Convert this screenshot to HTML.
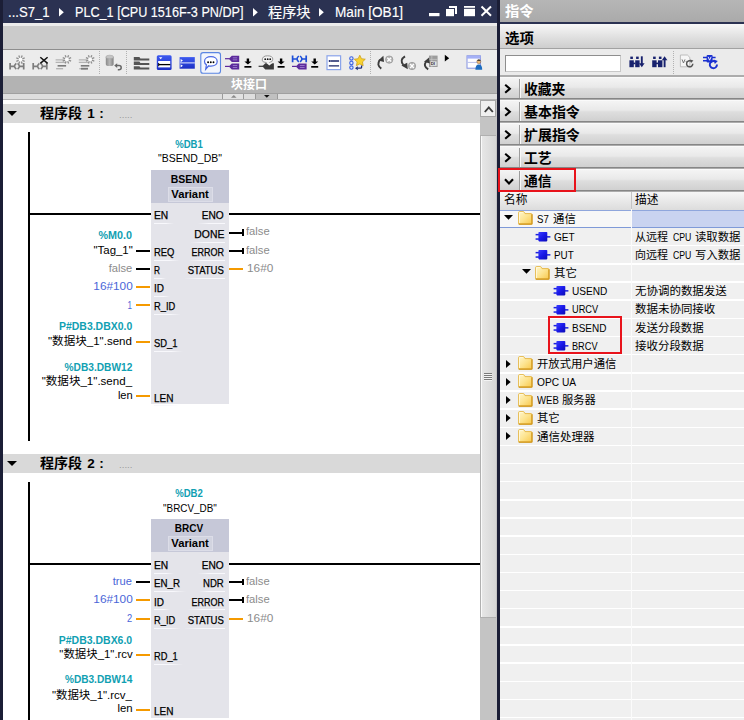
<!DOCTYPE html>
<html lang="zh-CN">
<head>
<meta charset="utf-8">
<title>TIA Portal - Main [OB1]</title>
<style>
html,body{margin:0;padding:0;}
body{width:744px;height:720px;overflow:hidden;position:relative;background:#fff;
  font-family:"Liberation Sans","Noto Sans CJK SC",sans-serif;font-size:11px;color:#000;}
.a{position:absolute;}
.t{position:absolute;white-space:nowrap;line-height:14px;height:14px;}
svg{position:absolute;overflow:visible;}
#ltitle{left:0;top:0;width:497px;height:23px;background:#2b3252;}
#lborder{left:0;top:0;width:3px;height:720px;background:#1b1e36;}
#lgray{left:3px;top:23px;width:494px;height:26.6px;background:#cbcbcb;border-top:3px solid #ebebeb;box-sizing:border-box;border-bottom:1.2px solid #8e8e8e;}
#ltool{left:3px;top:49.6px;width:494px;height:26.4px;background:#ececec;}
#lif{left:3px;top:76px;width:494px;height:17.4px;background:#b3b3b3;}
#lif2{left:3px;top:93.3px;width:494px;height:6.9px;background:#dedede;border-bottom:1.3px solid #b4b4b4;box-sizing:border-box;border-top:0.9px solid #a0a0a0;}
.tw{color:#fff;font-size:14px;-webkit-text-stroke:0.15px #fff;}
.tri{width:0;height:0;border-left:5px solid transparent;border-right:5px solid transparent;border-top:5.2px solid #000;}
.k{background:#000;}
.o{background:#f59a00;}
.blk{background:#e4e4ea;}
.bh{background:#c6c8d8;}
.cy{color:#10a0b2;font-weight:bold;font-size:11.6px;}
.gy{color:#8c8c8c;}
.bl{color:#4a66d8;}
.b{font-weight:bold;}
.pn{-webkit-text-stroke:0.25px #000;font-size:10.5px;}
.ul{height:1px;background:linear-gradient(90deg,#f8f8fc 60%,rgba(248,248,252,0));}
.ulr{height:1px;background:linear-gradient(270deg,#f8f8fc 60%,rgba(248,248,252,0));}
#sep{left:496.7px;top:0;width:3.3px;height:720px;background:#1b1e36;}
#rtitle{left:500px;top:0;width:244px;height:22px;background:linear-gradient(#b6b6b6,#aaaaaa);}
#rdark{left:500px;top:22px;width:244px;height:2px;background:#2b3252;}
#ropt{left:500px;top:24px;width:244px;height:25px;background:linear-gradient(#f8f8f8,#e2e2e2 50%,#cecece);border-bottom:1px solid #a2a2a2;box-sizing:border-box;}
#rsearch{left:500px;top:49px;width:244px;height:28px;background:#ebebeb;}
#sin{left:505px;top:54.5px;width:114px;height:15.5px;background:#fff;border:1px solid #8e8e8e;border-bottom-color:#c8c8c8;border-right-color:#c8c8c8;}
.sec{background:linear-gradient(#f4f4f4 0%,#e9e9e9 46%,#dedede 54%,#d0d0d0 100%);border-top:1px solid #fafafa;border-bottom:1.2px solid #868686;box-sizing:border-box;}
.secd{background:#9c9c9c;border-right:1px solid #f8f8f8;}
.sect{font-weight:bold;font-size:14px;}
.row{background:#f0f0f0;}
.red{border:2px solid #e8131b;box-sizing:border-box;}
#sbtrack{left:480px;top:100px;width:17px;height:620px;background:#c4c4c4;}
.r12{font-size:11.5px;}
</style>
</head>
<body>
<div class="a" id="ltitle"></div><div class="a" id="lgray"></div><div class="a" id="ltool"></div><div class="a" id="lif"></div><div class="a" id="lif2"></div>
<div class="t tw" style="top:3.8px;line-height:16px;height:16px;left:8.0px;transform:scaleX(0.9352);transform-origin:left center;">...S7_1</div>
<div class="t tw" style="top:3.8px;line-height:16px;height:16px;left:74.5px;transform:scaleX(0.9023);transform-origin:left center;">PLC_1 [CPU 1516F-3 PN/DP]</div>
<div class="t tw" style="top:3.8px;line-height:16px;height:16px;left:267.5px;transform:scaleX(1.0119);transform-origin:left center;">程序块</div>
<div class="t tw" style="top:3.8px;line-height:16px;height:16px;left:335.0px;transform:scaleX(0.9710);transform-origin:left center;">Main [OB1]</div>
<svg style="left:59.4px;top:7.6px" width="5" height="9"><path d="M0 0 L4.8 4.3 L0 8.6Z" fill="#fff"/></svg>
<svg style="left:253px;top:7.6px" width="5" height="9"><path d="M0 0 L4.8 4.3 L0 8.6Z" fill="#fff"/></svg>
<svg style="left:319.4px;top:7.6px" width="5" height="9"><path d="M0 0 L4.8 4.3 L0 8.6Z" fill="#fff"/></svg>
<svg style="left:429px;top:5px" width="64" height="13"><rect x="0" y="8" width="10.5" height="3.2" fill="#fff"/><path d="M20 1h8v8h-2v-6h-6z" fill="#fff"/><rect x="17" y="4" width="8" height="7.2" fill="#fff"/><rect x="35" y="1" width="11" height="10.2" fill="#fff"/><rect x="35" y="2.8" width="11" height="1" fill="#2b3252"/><path d="M52.5 1.5 L62 10.8 M62 1.5 L52.5 10.8" stroke="#fff" stroke-width="2"/></svg>
<div class="t b" style="top:77.5px;left:149.0px;width:200px;text-align:center;transform:scaleX(0.9996);transform-origin:center center;color:#fff;font-size:12px;">块接口</div>
<div class="a " style="left:222.3px;top:94.2px;width:22.2px;height:4.7px;border-left:1px solid #9a9a9a;border-right:1px solid #9a9a9a;box-sizing:border-box;background:#e2e2e2;"></div>
<div class="a " style="left:255.3px;top:94.2px;width:22.6px;height:4.7px;border-left:1px solid #9a9a9a;border-right:1px solid #9a9a9a;box-sizing:border-box;background:#c0c0c0;"></div>
<svg style="left:231.2px;top:95.2px" width="6" height="3"><path d="M0 2.8L2.8 0L5.6 2.8Z" fill="#8a8a8a"/></svg>
<svg style="left:263.6px;top:94.8px" width="6" height="3"><path d="M0 0L2.8 2.8L5.6 0Z" fill="#111"/></svg>
<div class="a" id="sbtrack"></div>
<div class="a " style="left:480.2px;top:100.4px;width:16.0px;height:17.0px;background:#f0f0f0;border:1px solid #a6a6a6;box-sizing:border-box;"></div>
<svg style="left:483.6px;top:105.6px" width="10" height="7"><path d="M0.8 6L4.8 1.4L8.8 6" stroke="#3c3c3c" stroke-width="1.9" fill="none"/></svg>
<div class="a " style="left:479.7px;top:135.0px;width:16.8px;height:482.6px;background:linear-gradient(90deg,#fafafa 0,#fafafa 1.2px,#e6e6e6 1.3px,#d6d6d6 14.6px,#f2f2f2 14.7px);border:1px solid #b0b0b0;border-right:none;box-sizing:border-box;"></div>
<div class="a " style="left:484.3px;top:373.1px;width:7.8px;height:1.0px;background:#7a7a7a;box-shadow:0 1px 0 #f4f4f4;"></div>
<div class="a " style="left:484.3px;top:375.0px;width:7.8px;height:1.0px;background:#7a7a7a;box-shadow:0 1px 0 #f4f4f4;"></div>
<div class="a " style="left:484.3px;top:377.0px;width:7.8px;height:1.0px;background:#7a7a7a;box-shadow:0 1px 0 #f4f4f4;"></div>
<div class="a " style="left:484.3px;top:378.9px;width:7.8px;height:1.0px;background:#7a7a7a;box-shadow:0 1px 0 #f4f4f4;"></div>
<div class="a " style="left:3.0px;top:104.2px;width:477.0px;height:19.3px;background:#d9d9d9;"></div>
<div class="a tri" style="left:7px;top:111.0px"></div>
<div class="t b" style="top:105.8px;line-height:16px;height:16px;left:40.3px;transform:scaleX(1.0370);transform-origin:left center;font-size:13.5px;">程序段</div>
<div class="t b" style="top:105.9px;line-height:16px;height:16px;left:87.2px;font-size:13.5px;">1</div>
<div class="t b" style="top:105.6px;line-height:16px;height:16px;left:99.3px;font-size:13.5px;">:</div>
<div class="t " style="top:107.6px;left:118.5px;transform:scaleX(1.0787);transform-origin:left center;font-size:9px;color:#9a9a9a;">.....</div>
<div class="a k" style="left:28.2px;top:132.0px;width:2.0px;height:309.0px;"></div>
<div class="t cy" style="top:137.2px;left:89.0px;width:200px;text-align:center;transform:scaleX(0.8235);transform-origin:center center;">%DB1</div>
<div class="t " style="top:151.4px;left:89.5px;width:200px;text-align:center;transform:scaleX(0.9507);transform-origin:center center;">"BSEND_DB"</div>
<div class="a blk" style="left:150.5px;top:170.2px;width:78.0px;height:234.3px;"></div>
<div class="a bh" style="left:150.5px;top:170.2px;width:78.0px;height:32.8px;"></div>
<div class="t b" style="top:172.1px;left:89.2px;width:200px;text-align:center;transform:scaleX(0.9867);transform-origin:center center;font-size:10.6px;">BSEND</div>
<div class="a " style="left:167.5px;top:187.0px;width:45.0px;height:15.0px;background:#d2d4e0;border:1px solid #dcdde8;box-sizing:border-box;"></div>
<div class="t b" style="top:186.9px;left:89.5px;width:200px;text-align:center;transform:scaleX(1.0610);transform-origin:center center;font-size:10.6px;">Variant</div>
<div class="a k" style="left:30.0px;top:212.9px;width:120.5px;height:2.0px;"></div>
<div class="a k" style="left:228.5px;top:212.9px;width:251.5px;height:2.0px;"></div>
<div class="t pn" style="top:208.2px;left:154.3px;transform:scaleX(0.9730);transform-origin:left center;">EN</div>
<div class="a ul" style="left:153.5px;top:222.9px;width:20.2px;height:1.0px;"></div>
<div class="t pn" style="top:245.3px;left:154.3px;transform:scaleX(0.8961);transform-origin:left center;">REQ</div>
<div class="a ul" style="left:153.5px;top:260.0px;width:26.4px;height:1.0px;"></div>
<div class="t pn" style="top:262.9px;left:154.3px;transform:scaleX(0.7901);transform-origin:left center;">R</div>
<div class="a ul" style="left:153.5px;top:277.6px;width:12.0px;height:1.0px;"></div>
<div class="t pn" style="top:281.1px;left:154.3px;transform:scaleX(0.9524);transform-origin:left center;">ID</div>
<div class="a ul" style="left:153.5px;top:295.8px;width:16.0px;height:1.0px;"></div>
<div class="t pn" style="top:299.4px;left:154.3px;transform:scaleX(0.8856);transform-origin:left center;">R_ID</div>
<div class="a ul" style="left:153.5px;top:314.1px;width:27.2px;height:1.0px;"></div>
<div class="t pn" style="top:335.8px;left:154.3px;transform:scaleX(0.8947);transform-origin:left center;">SD_1</div>
<div class="a ul" style="left:153.5px;top:350.5px;width:29.5px;height:1.0px;"></div>
<div class="t pn" style="top:390.5px;left:154.3px;transform:scaleX(0.9541);transform-origin:left center;">LEN</div>
<div class="a ul" style="left:153.5px;top:405.2px;width:25.5px;height:1.0px;"></div>
<div class="t pn" style="top:208.2px;right:519.9px;transform:scaleX(0.9664);transform-origin:right center;">ENO</div>
<div class="a ulr" style="left:198.1px;top:222.9px;width:27.0px;height:1.0px;"></div>
<div class="t pn" style="top:227.0px;right:519.9px;transform:scaleX(0.9887);transform-origin:right center;">DONE</div>
<div class="a ulr" style="left:190.1px;top:241.7px;width:35.0px;height:1.0px;"></div>
<div class="a k" style="left:228.5px;top:231.7px;width:14.0px;height:2.0px;"></div>
<div class="a k" style="left:242.0px;top:229.2px;width:1.7px;height:6.5px;"></div>
<div class="t gy" style="top:224.2px;left:246.4px;transform:scaleX(1.0194);transform-origin:left center;">false</div>
<div class="t pn" style="top:245.3px;right:519.9px;transform:scaleX(0.8570);transform-origin:right center;">ERROR</div>
<div class="a ulr" style="left:187.6px;top:260.0px;width:37.5px;height:1.0px;"></div>
<div class="a k" style="left:228.5px;top:250.0px;width:14.0px;height:2.0px;"></div>
<div class="a k" style="left:242.0px;top:247.5px;width:1.7px;height:6.5px;"></div>
<div class="t gy" style="top:242.5px;left:246.4px;transform:scaleX(1.0194);transform-origin:left center;">false</div>
<div class="t pn" style="top:262.9px;right:519.9px;transform:scaleX(0.9078);transform-origin:right center;">STATUS</div>
<div class="a ulr" style="left:183.9px;top:277.6px;width:41.2px;height:1.0px;"></div>
<div class="a o" style="left:228.5px;top:267.6px;width:14.5px;height:2.0px;"></div>
<div class="t gy" style="top:261.0px;left:247.2px;transform:scaleX(1.0742);transform-origin:left center;">16#0</div>
<div class="t cy" style="top:228.3px;right:611.7px;transform:scaleX(0.9309);transform-origin:right center;">%M0.0</div>
<div class="t " style="top:242.8px;right:611.7px;transform:scaleX(1.0402);transform-origin:right center;">"Tag_1"</div>
<div class="a k" style="left:136.3px;top:250.0px;width:14.2px;height:2.0px;"></div>
<div class="t gy" style="top:260.7px;right:611.7px;transform:scaleX(1.0151);transform-origin:right center;">false</div>
<div class="a k" style="left:136.3px;top:267.6px;width:14.2px;height:2.0px;"></div>
<div class="t bl" style="top:279.2px;right:611.7px;transform:scaleX(1.0730);transform-origin:right center;">16#100</div>
<div class="a o" style="left:136.3px;top:285.8px;width:14.2px;height:2.0px;"></div>
<div class="t bl" style="top:297.5px;right:611.7px;transform:scaleX(0.7347);transform-origin:right center;">1</div>
<div class="a o" style="left:136.3px;top:304.1px;width:14.2px;height:2.0px;"></div>
<div class="t cy" style="top:319.4px;right:611.7px;transform:scaleX(0.9014);transform-origin:right center;">P#DB3.DBX0.0</div>
<div class="t " style="top:333.8px;right:611.7px;transform:scaleX(1.0504);transform-origin:right center;">"数据块_1".send</div>
<div class="a o" style="left:136.3px;top:340.5px;width:14.2px;height:2.0px;"></div>
<div class="t cy" style="top:359.5px;right:611.7px;transform:scaleX(0.8770);transform-origin:right center;">%DB3.DBW12</div>
<div class="t " style="top:374.2px;right:611.7px;transform:scaleX(1.0502);transform-origin:right center;">"数据块_1".send_</div>
<div class="t " style="top:387.6px;right:611.7px;transform:scaleX(1.0077);transform-origin:right center;">len</div>
<div class="a o" style="left:136.3px;top:395.2px;width:14.2px;height:2.0px;"></div>
<div class="a " style="left:3.0px;top:454.2px;width:477.0px;height:19.3px;background:#d9d9d9;"></div>
<div class="a tri" style="left:7px;top:461.0px"></div>
<div class="t b" style="top:455.8px;line-height:16px;height:16px;left:40.3px;transform:scaleX(1.0370);transform-origin:left center;font-size:13.5px;">程序段</div>
<div class="t b" style="top:455.9px;line-height:16px;height:16px;left:87.2px;font-size:13.5px;">2</div>
<div class="t b" style="top:455.6px;line-height:16px;height:16px;left:99.3px;font-size:13.5px;">:</div>
<div class="t " style="top:457.6px;left:118.5px;transform:scaleX(1.0787);transform-origin:left center;font-size:9px;color:#9a9a9a;">.....</div>
<div class="a k" style="left:28.2px;top:482.0px;width:2.0px;height:238.0px;"></div>
<div class="t cy" style="top:486.3px;left:89.0px;width:200px;text-align:center;transform:scaleX(0.8235);transform-origin:center center;">%DB2</div>
<div class="t " style="top:500.5px;left:89.5px;width:200px;text-align:center;transform:scaleX(0.8999);transform-origin:center center;">"BRCV_DB"</div>
<div class="a blk" style="left:150.5px;top:519.3px;width:78.0px;height:198.7px;"></div>
<div class="a bh" style="left:150.5px;top:519.3px;width:78.0px;height:32.8px;"></div>
<div class="t b" style="top:521.2px;left:89.2px;width:200px;text-align:center;transform:scaleX(0.9457);transform-origin:center center;font-size:10.6px;">BRCV</div>
<div class="a " style="left:167.5px;top:536.1px;width:45.0px;height:15.0px;background:#d2d4e0;border:1px solid #dcdde8;box-sizing:border-box;"></div>
<div class="t b" style="top:536.0px;left:89.5px;width:200px;text-align:center;transform:scaleX(1.0610);transform-origin:center center;font-size:10.6px;">Variant</div>
<div class="a k" style="left:30.0px;top:562.9px;width:120.5px;height:2.0px;"></div>
<div class="a k" style="left:228.5px;top:562.9px;width:251.5px;height:2.0px;"></div>
<div class="t pn" style="top:558.2px;left:154.3px;transform:scaleX(0.9730);transform-origin:left center;">EN</div>
<div class="a ul" style="left:153.5px;top:572.9px;width:20.2px;height:1.0px;"></div>
<div class="t pn" style="top:576.4px;left:154.3px;transform:scaleX(0.9281);transform-origin:left center;">EN_R</div>
<div class="a ul" style="left:153.5px;top:591.1px;width:32.0px;height:1.0px;"></div>
<div class="t pn" style="top:594.7px;left:154.3px;transform:scaleX(0.9524);transform-origin:left center;">ID</div>
<div class="a ul" style="left:153.5px;top:609.4px;width:16.0px;height:1.0px;"></div>
<div class="t pn" style="top:612.9px;left:154.3px;transform:scaleX(0.8856);transform-origin:left center;">R_ID</div>
<div class="a ul" style="left:153.5px;top:627.6px;width:27.2px;height:1.0px;"></div>
<div class="t pn" style="top:649.3px;left:154.3px;transform:scaleX(0.8824);transform-origin:left center;">RD_1</div>
<div class="a ul" style="left:153.5px;top:664.0px;width:29.7px;height:1.0px;"></div>
<div class="t pn" style="top:704.0px;left:154.3px;transform:scaleX(0.9541);transform-origin:left center;">LEN</div>
<div class="a ul" style="left:153.5px;top:718.7px;width:25.5px;height:1.0px;"></div>
<div class="t pn" style="top:558.2px;right:519.9px;transform:scaleX(0.9664);transform-origin:right center;">ENO</div>
<div class="a ulr" style="left:198.1px;top:572.9px;width:27.0px;height:1.0px;"></div>
<div class="t pn" style="top:576.4px;right:519.9px;transform:scaleX(0.9099);transform-origin:right center;">NDR</div>
<div class="a ulr" style="left:199.4px;top:591.1px;width:25.7px;height:1.0px;"></div>
<div class="a k" style="left:228.5px;top:581.1px;width:14.0px;height:2.0px;"></div>
<div class="a k" style="left:242.0px;top:578.6px;width:1.7px;height:6.5px;"></div>
<div class="t gy" style="top:573.6px;left:246.4px;transform:scaleX(1.0194);transform-origin:left center;">false</div>
<div class="t pn" style="top:594.7px;right:519.9px;transform:scaleX(0.8570);transform-origin:right center;">ERROR</div>
<div class="a ulr" style="left:187.6px;top:609.4px;width:37.5px;height:1.0px;"></div>
<div class="a k" style="left:228.5px;top:599.4px;width:14.0px;height:2.0px;"></div>
<div class="a k" style="left:242.0px;top:596.9px;width:1.7px;height:6.5px;"></div>
<div class="t gy" style="top:591.9px;left:246.4px;transform:scaleX(1.0194);transform-origin:left center;">false</div>
<div class="t pn" style="top:612.9px;right:519.9px;transform:scaleX(0.9078);transform-origin:right center;">STATUS</div>
<div class="a ulr" style="left:183.9px;top:627.6px;width:41.2px;height:1.0px;"></div>
<div class="a o" style="left:228.5px;top:617.6px;width:14.5px;height:2.0px;"></div>
<div class="t gy" style="top:611.0px;left:247.2px;transform:scaleX(1.0742);transform-origin:left center;">16#0</div>
<div class="t bl" style="top:574.0px;right:611.7px;transform:scaleX(1.0122);transform-origin:right center;">true</div>
<div class="a k" style="left:136.3px;top:581.1px;width:14.2px;height:2.0px;"></div>
<div class="t bl" style="top:592.2px;right:611.7px;transform:scaleX(1.0730);transform-origin:right center;">16#100</div>
<div class="a o" style="left:136.3px;top:599.4px;width:14.2px;height:2.0px;"></div>
<div class="t bl" style="top:610.7px;right:611.7px;transform:scaleX(0.8490);transform-origin:right center;">2</div>
<div class="a o" style="left:136.3px;top:617.6px;width:14.2px;height:2.0px;"></div>
<div class="t cy" style="top:632.6px;right:611.7px;transform:scaleX(0.9039);transform-origin:right center;">P#DB3.DBX6.0</div>
<div class="t " style="top:647.4px;right:611.7px;transform:scaleX(1.0372);transform-origin:right center;">"数据块_1".rcv</div>
<div class="a o" style="left:136.3px;top:654.0px;width:14.2px;height:2.0px;"></div>
<div class="t cy" style="top:672.0px;right:611.7px;transform:scaleX(0.8718);transform-origin:right center;">%DB3.DBW14</div>
<div class="t " style="top:687.6px;right:611.7px;transform:scaleX(1.0404);transform-origin:right center;">"数据块_1".rcv_</div>
<div class="t " style="top:700.5px;right:611.7px;transform:scaleX(1.0349);transform-origin:right center;">len</div>
<div class="a o" style="left:136.3px;top:708.7px;width:14.2px;height:2.0px;"></div>
<div class="a" id="lborder"></div>
<div class="a" id="sep"></div><div class="a" id="rtitle"></div><div class="a" id="rdark"></div><div class="a" id="ropt"></div><div class="a" id="rsearch"></div><div class="a" id="sin"></div>
<div class="t b" style="top:3.0px;line-height:16px;height:16px;left:505.3px;transform:scaleX(1.0214);transform-origin:left center;color:#fff;font-size:14px;">指令</div>
<div class="t b" style="top:29.5px;line-height:16px;height:16px;left:505.3px;transform:scaleX(1.0286);transform-origin:left center;font-size:14px;">选项</div>
<div class="a " style="left:500.0px;top:75.4px;width:244.0px;height:117.0px;background:#acacac;"></div>
<div class="a sec" style="left:500.0px;top:77.0px;width:244.0px;height:21.6px;"></div>
<div class="a secd" style="left:519.0px;top:79.0px;width:1.0px;height:18.6px;"></div>
<div class="t sect" style="top:80.5px;line-height:16px;height:16px;left:524.3px;transform:scaleX(0.9857);transform-origin:left center;">收藏夹</div>
<svg style="left:504.2px;top:84.0px" width="8" height="10"><path d="M1.2 0.8L5.8 4.8L1.2 8.8" stroke="#000" stroke-width="2.1" fill="none"/></svg>
<div class="a sec" style="left:500.0px;top:100.0px;width:244.0px;height:21.6px;"></div>
<div class="a secd" style="left:519.0px;top:102.0px;width:1.0px;height:18.6px;"></div>
<div class="t sect" style="top:103.5px;line-height:16px;height:16px;left:524.3px;transform:scaleX(0.9964);transform-origin:left center;">基本指令</div>
<svg style="left:504.2px;top:107.0px" width="8" height="10"><path d="M1.2 0.8L5.8 4.8L1.2 8.8" stroke="#000" stroke-width="2.1" fill="none"/></svg>
<div class="a sec" style="left:500.0px;top:123.1px;width:244.0px;height:21.6px;"></div>
<div class="a secd" style="left:519.0px;top:125.1px;width:1.0px;height:18.6px;"></div>
<div class="t sect" style="top:126.6px;line-height:16px;height:16px;left:524.3px;transform:scaleX(0.9964);transform-origin:left center;">扩展指令</div>
<svg style="left:504.2px;top:130.1px" width="8" height="10"><path d="M1.2 0.8L5.8 4.8L1.2 8.8" stroke="#000" stroke-width="2.1" fill="none"/></svg>
<div class="a sec" style="left:500.0px;top:146.2px;width:244.0px;height:21.6px;"></div>
<div class="a secd" style="left:519.0px;top:148.2px;width:1.0px;height:18.6px;"></div>
<div class="t sect" style="top:149.7px;line-height:16px;height:16px;left:524.3px;transform:scaleX(0.9857);transform-origin:left center;">工艺</div>
<svg style="left:504.2px;top:153.2px" width="8" height="10"><path d="M1.2 0.8L5.8 4.8L1.2 8.8" stroke="#000" stroke-width="2.1" fill="none"/></svg>
<div class="a sec" style="left:500.0px;top:169.2px;width:244.0px;height:21.6px;"></div>
<div class="a secd" style="left:519.0px;top:171.2px;width:1.0px;height:18.6px;"></div>
<div class="t sect" style="top:172.7px;line-height:16px;height:16px;left:524.3px;transform:scaleX(0.9857);transform-origin:left center;">通信</div>
<svg style="left:503.8px;top:177.5px" width="10" height="7"><path d="M1 1.2L5 5.4L9 1.2" stroke="#000" stroke-width="2.1" fill="none"/></svg>
<div class="a " style="left:500.0px;top:192.0px;width:244.0px;height:17.6px;background:linear-gradient(#f6f6f6,#e9e9e9 50%,#dcdcdc);"></div>
<div class="t " style="top:191.8px;line-height:16px;height:16px;left:503.7px;transform:scaleX(0.9785);transform-origin:left center;font-size:12px;">名称</div>
<div class="t " style="top:191.8px;line-height:16px;height:16px;left:634.5px;transform:scaleX(0.9785);transform-origin:left center;font-size:12px;">描述</div>
<div class="a row" style="left:500.0px;top:210.1px;width:244.0px;height:16.8px;"></div>
<div class="a row" style="left:500.0px;top:228.2px;width:244.0px;height:16.8px;"></div>
<div class="a row" style="left:500.0px;top:246.4px;width:244.0px;height:16.8px;"></div>
<div class="a row" style="left:500.0px;top:264.6px;width:244.0px;height:16.8px;"></div>
<div class="a row" style="left:500.0px;top:282.7px;width:244.0px;height:16.8px;"></div>
<div class="a row" style="left:500.0px;top:300.9px;width:244.0px;height:16.8px;"></div>
<div class="a row" style="left:500.0px;top:319.0px;width:244.0px;height:16.8px;"></div>
<div class="a row" style="left:500.0px;top:337.1px;width:244.0px;height:16.8px;"></div>
<div class="a row" style="left:500.0px;top:355.3px;width:244.0px;height:16.8px;"></div>
<div class="a row" style="left:500.0px;top:373.5px;width:244.0px;height:16.8px;"></div>
<div class="a row" style="left:500.0px;top:391.6px;width:244.0px;height:16.8px;"></div>
<div class="a row" style="left:500.0px;top:409.8px;width:244.0px;height:16.8px;"></div>
<div class="a row" style="left:500.0px;top:427.9px;width:244.0px;height:16.8px;"></div>
<div class="a row" style="left:500.0px;top:446.1px;width:244.0px;height:16.8px;"></div>
<div class="a row" style="left:500.0px;top:464.2px;width:244.0px;height:16.8px;"></div>
<div class="a row" style="left:500.0px;top:482.4px;width:244.0px;height:16.8px;"></div>
<div class="a row" style="left:500.0px;top:500.5px;width:244.0px;height:16.8px;"></div>
<div class="a row" style="left:500.0px;top:518.6px;width:244.0px;height:16.8px;"></div>
<div class="a row" style="left:500.0px;top:536.8px;width:244.0px;height:16.8px;"></div>
<div class="a row" style="left:500.0px;top:554.9px;width:244.0px;height:16.8px;"></div>
<div class="a row" style="left:500.0px;top:573.1px;width:244.0px;height:16.8px;"></div>
<div class="a row" style="left:500.0px;top:591.2px;width:244.0px;height:16.8px;"></div>
<div class="a row" style="left:500.0px;top:609.4px;width:244.0px;height:16.8px;"></div>
<div class="a row" style="left:500.0px;top:627.6px;width:244.0px;height:16.8px;"></div>
<div class="a row" style="left:500.0px;top:645.7px;width:244.0px;height:16.8px;"></div>
<div class="a row" style="left:500.0px;top:663.9px;width:244.0px;height:16.8px;"></div>
<div class="a row" style="left:500.0px;top:682.0px;width:244.0px;height:16.8px;"></div>
<div class="a row" style="left:500.0px;top:700.1px;width:244.0px;height:16.8px;"></div>
<div class="a row" style="left:500.0px;top:718.3px;width:244.0px;height:16.8px;"></div>
<div class="a " style="left:500.0px;top:210.1px;width:131.0px;height:16.8px;background:#f7f7f7;"></div>
<div class="a " style="left:631.5px;top:210.1px;width:112.5px;height:16.8px;background:#c9d3f0;"></div>
<div class="a " style="left:500.0px;top:209.6px;width:244.0px;height:1.3px;background:#8fa6dc;"></div>
<div class="a " style="left:500.0px;top:226.7px;width:244.0px;height:1.3px;background:#7f9ad8;"></div>
<div class="a " style="left:630.6px;top:209.0px;width:1.0px;height:520.0px;background:#fbfbfb;"></div>
<div class="a " style="left:630.6px;top:192.0px;width:1.0px;height:17.0px;background:#c4c4c4;"></div>
<svg width="0" height="0"><defs><linearGradient id="fg" x1="0" y1="0" x2="1" y2="1"><stop offset="0" stop-color="#fff6cc"/><stop offset="0.5" stop-color="#fde490"/><stop offset="1" stop-color="#f8c84c"/></linearGradient><linearGradient id="fs" x1="0" y1="0" x2="1" y2="1"><stop offset="0" stop-color="#ecc860"/><stop offset="1" stop-color="#c4962a"/></linearGradient><linearGradient id="bgf" x1="0" y1="0" x2="1" y2="1"><stop offset="0" stop-color="#3a3cff"/><stop offset="0.5" stop-color="#1818e8"/><stop offset="1" stop-color="#0c0cb4"/></linearGradient></defs></svg>
<svg style="left:504.2px;top:214.9px" width="9" height="5"><path d="M0 0H9L4.5 4.7Z" fill="#000"/></svg>
<svg style="left:518.0px;top:211.1px" width="15" height="14"><path d="M0.6 1.4 q0 -0.8 0.8 -0.8 h4 q0.6 0 0.9 0.6 l0.7 1.4 h6 q0.9 0 0.9 0.9 v9 q0 0.6 -0.6 0.6 h-12.1 q-0.6 0 -0.6 -0.6z" fill="url(#fg)" stroke="#e4b440" stroke-width="0.9"/><path d="M0.7 13.1h12.9q0.4 0 0.4 -0.4v-9.4" fill="none" stroke="#cf9416" stroke-width="1.2"/><path d="M1.5 12V1.6h3.6" fill="none" stroke="#fffbe6" stroke-width="0.8"/></svg>
<div class="t r12" style="top:210.7px;line-height:16px;height:16px;left:537.3px;transform:scaleX(0.8382);transform-origin:left center;">S7</div>
<div class="t r12" style="top:210.7px;line-height:16px;height:16px;left:552.6px;transform:scaleX(0.9913);transform-origin:left center;">通信</div>
<svg style="left:535.3px;top:231.9px" width="16" height="11"><rect x="0.6" y="1.9" width="4" height="1.5" fill="#1c22e0"/><rect x="0.6" y="6.3" width="4" height="1.5" fill="#1c22e0"/><rect x="11.5" y="4.1" width="3.9" height="1.5" fill="#1c22e0"/><rect x="3.4" y="0" width="8.9" height="9.4" rx="0.8" fill="url(#bgf)"/></svg>
<div class="t r12" style="top:228.9px;line-height:16px;height:16px;left:554.2px;transform:scaleX(0.8756);transform-origin:left center;">GET</div>
<div class="t r12" style="top:228.9px;line-height:16px;height:16px;left:634.5px;transform:scaleX(0.9565);transform-origin:left center;">从远程</div>
<div class="t r12" style="top:228.9px;line-height:16px;height:16px;left:673.0px;transform:scaleX(0.7578);transform-origin:left center;">CPU</div>
<div class="t r12" style="top:228.9px;line-height:16px;height:16px;left:695.4px;transform:scaleX(0.9870);transform-origin:left center;">读取数据</div>
<svg style="left:535.3px;top:250.1px" width="16" height="11"><rect x="0.6" y="1.9" width="4" height="1.5" fill="#1c22e0"/><rect x="0.6" y="6.3" width="4" height="1.5" fill="#1c22e0"/><rect x="11.5" y="4.1" width="3.9" height="1.5" fill="#1c22e0"/><rect x="3.4" y="0" width="8.9" height="9.4" rx="0.8" fill="url(#bgf)"/></svg>
<div class="t r12" style="top:247.0px;line-height:16px;height:16px;left:554.2px;transform:scaleX(0.8565);transform-origin:left center;">PUT</div>
<div class="t r12" style="top:247.0px;line-height:16px;height:16px;left:634.5px;transform:scaleX(0.9565);transform-origin:left center;">向远程</div>
<div class="t r12" style="top:247.0px;line-height:16px;height:16px;left:673.0px;transform:scaleX(0.7578);transform-origin:left center;">CPU</div>
<div class="t r12" style="top:247.0px;line-height:16px;height:16px;left:695.4px;transform:scaleX(0.9870);transform-origin:left center;">写入数据</div>
<svg style="left:522.2px;top:269.4px" width="9" height="5"><path d="M0 0H9L4.5 4.7Z" fill="#000"/></svg>
<svg style="left:535.3px;top:265.6px" width="15" height="14"><path d="M0.6 1.4 q0 -0.8 0.8 -0.8 h4 q0.6 0 0.9 0.6 l0.7 1.4 h6 q0.9 0 0.9 0.9 v9 q0 0.6 -0.6 0.6 h-12.1 q-0.6 0 -0.6 -0.6z" fill="url(#fg)" stroke="#e4b440" stroke-width="0.9"/><path d="M0.7 13.1h12.9q0.4 0 0.4 -0.4v-9.4" fill="none" stroke="#cf9416" stroke-width="1.2"/><path d="M1.5 12V1.6h3.6" fill="none" stroke="#fffbe6" stroke-width="0.8"/></svg>
<div class="t r12" style="top:265.2px;line-height:16px;height:16px;left:554.3px;transform:scaleX(0.9957);transform-origin:left center;">其它</div>
<svg style="left:553.1px;top:286.4px" width="16" height="11"><rect x="0.6" y="1.9" width="4" height="1.5" fill="#1c22e0"/><rect x="0.6" y="6.3" width="4" height="1.5" fill="#1c22e0"/><rect x="11.5" y="4.1" width="3.9" height="1.5" fill="#1c22e0"/><rect x="3.4" y="0" width="8.9" height="9.4" rx="0.8" fill="url(#bgf)"/></svg>
<div class="t r12" style="top:283.3px;line-height:16px;height:16px;left:572.0px;transform:scaleX(0.8792);transform-origin:left center;">USEND</div>
<div class="t r12" style="top:283.3px;line-height:16px;height:16px;left:634.5px;transform:scaleX(0.9978);transform-origin:left center;">无协调的数据发送</div>
<svg style="left:553.1px;top:304.5px" width="16" height="11"><rect x="0.6" y="1.9" width="4" height="1.5" fill="#1c22e0"/><rect x="0.6" y="6.3" width="4" height="1.5" fill="#1c22e0"/><rect x="11.5" y="4.1" width="3.9" height="1.5" fill="#1c22e0"/><rect x="3.4" y="0" width="8.9" height="9.4" rx="0.8" fill="url(#bgf)"/></svg>
<div class="t r12" style="top:301.4px;line-height:16px;height:16px;left:572.0px;transform:scaleX(0.8038);transform-origin:left center;">URCV</div>
<div class="t r12" style="top:301.4px;line-height:16px;height:16px;left:634.5px;transform:scaleX(0.9975);transform-origin:left center;">数据未协同接收</div>
<svg style="left:553.1px;top:322.7px" width="16" height="11"><rect x="0.6" y="1.9" width="4" height="1.5" fill="#1c22e0"/><rect x="0.6" y="6.3" width="4" height="1.5" fill="#1c22e0"/><rect x="11.5" y="4.1" width="3.9" height="1.5" fill="#1c22e0"/><rect x="3.4" y="0" width="8.9" height="9.4" rx="0.8" fill="url(#bgf)"/></svg>
<div class="t r12" style="top:319.6px;line-height:16px;height:16px;left:572.0px;transform:scaleX(0.8681);transform-origin:left center;">BSEND</div>
<div class="t r12" style="top:319.6px;line-height:16px;height:16px;left:634.5px;transform:scaleX(0.9971);transform-origin:left center;">发送分段数据</div>
<svg style="left:553.1px;top:340.8px" width="16" height="11"><rect x="0.6" y="1.9" width="4" height="1.5" fill="#1c22e0"/><rect x="0.6" y="6.3" width="4" height="1.5" fill="#1c22e0"/><rect x="11.5" y="4.1" width="3.9" height="1.5" fill="#1c22e0"/><rect x="3.4" y="0" width="8.9" height="9.4" rx="0.8" fill="url(#bgf)"/></svg>
<div class="t r12" style="top:337.8px;line-height:16px;height:16px;left:572.0px;transform:scaleX(0.7980);transform-origin:left center;">BRCV</div>
<div class="t r12" style="top:337.8px;line-height:16px;height:16px;left:634.5px;transform:scaleX(0.9971);transform-origin:left center;">接收分段数据</div>
<svg style="left:506.0px;top:359.6px" width="5" height="8"><path d="M0 0V8L4.7 4Z" fill="#000"/></svg>
<svg style="left:518.0px;top:356.3px" width="15" height="14"><path d="M0.6 1.4 q0 -0.8 0.8 -0.8 h4 q0.6 0 0.9 0.6 l0.7 1.4 h6 q0.9 0 0.9 0.9 v9 q0 0.6 -0.6 0.6 h-12.1 q-0.6 0 -0.6 -0.6z" fill="url(#fg)" stroke="#e4b440" stroke-width="0.9"/><path d="M0.7 13.1h12.9q0.4 0 0.4 -0.4v-9.4" fill="none" stroke="#cf9416" stroke-width="1.2"/><path d="M1.5 12V1.6h3.6" fill="none" stroke="#fffbe6" stroke-width="0.8"/></svg>
<div class="t r12" style="top:355.9px;line-height:16px;height:16px;left:537.0px;transform:scaleX(0.9863);transform-origin:left center;">开放式用户通信</div>
<svg style="left:506.0px;top:377.8px" width="5" height="8"><path d="M0 0V8L4.7 4Z" fill="#000"/></svg>
<svg style="left:518.0px;top:374.4px" width="15" height="14"><path d="M0.6 1.4 q0 -0.8 0.8 -0.8 h4 q0.6 0 0.9 0.6 l0.7 1.4 h6 q0.9 0 0.9 0.9 v9 q0 0.6 -0.6 0.6 h-12.1 q-0.6 0 -0.6 -0.6z" fill="url(#fg)" stroke="#e4b440" stroke-width="0.9"/><path d="M0.7 13.1h12.9q0.4 0 0.4 -0.4v-9.4" fill="none" stroke="#cf9416" stroke-width="1.2"/><path d="M1.5 12V1.6h3.6" fill="none" stroke="#fffbe6" stroke-width="0.8"/></svg>
<div class="t r12" style="top:374.1px;line-height:16px;height:16px;left:537.0px;transform:scaleX(0.8867);transform-origin:left center;">OPC UA</div>
<svg style="left:506.0px;top:395.9px" width="5" height="8"><path d="M0 0V8L4.7 4Z" fill="#000"/></svg>
<svg style="left:518.0px;top:392.6px" width="15" height="14"><path d="M0.6 1.4 q0 -0.8 0.8 -0.8 h4 q0.6 0 0.9 0.6 l0.7 1.4 h6 q0.9 0 0.9 0.9 v9 q0 0.6 -0.6 0.6 h-12.1 q-0.6 0 -0.6 -0.6z" fill="url(#fg)" stroke="#e4b440" stroke-width="0.9"/><path d="M0.7 13.1h12.9q0.4 0 0.4 -0.4v-9.4" fill="none" stroke="#cf9416" stroke-width="1.2"/><path d="M1.5 12V1.6h3.6" fill="none" stroke="#fffbe6" stroke-width="0.8"/></svg>
<div class="t r12" style="top:392.2px;line-height:16px;height:16px;left:537.2px;transform:scaleX(0.8320);transform-origin:left center;">WEB</div>
<div class="t r12" style="top:392.2px;line-height:16px;height:16px;left:562.3px;transform:scaleX(0.9797);transform-origin:left center;">服务器</div>
<svg style="left:506.0px;top:414.0px" width="5" height="8"><path d="M0 0V8L4.7 4Z" fill="#000"/></svg>
<svg style="left:518.0px;top:410.7px" width="15" height="14"><path d="M0.6 1.4 q0 -0.8 0.8 -0.8 h4 q0.6 0 0.9 0.6 l0.7 1.4 h6 q0.9 0 0.9 0.9 v9 q0 0.6 -0.6 0.6 h-12.1 q-0.6 0 -0.6 -0.6z" fill="url(#fg)" stroke="#e4b440" stroke-width="0.9"/><path d="M0.7 13.1h12.9q0.4 0 0.4 -0.4v-9.4" fill="none" stroke="#cf9416" stroke-width="1.2"/><path d="M1.5 12V1.6h3.6" fill="none" stroke="#fffbe6" stroke-width="0.8"/></svg>
<div class="t r12" style="top:410.3px;line-height:16px;height:16px;left:537.0px;transform:scaleX(0.9870);transform-origin:left center;">其它</div>
<svg style="left:506.0px;top:432.2px" width="5" height="8"><path d="M0 0V8L4.7 4Z" fill="#000"/></svg>
<svg style="left:518.0px;top:428.9px" width="15" height="14"><path d="M0.6 1.4 q0 -0.8 0.8 -0.8 h4 q0.6 0 0.9 0.6 l0.7 1.4 h6 q0.9 0 0.9 0.9 v9 q0 0.6 -0.6 0.6 h-12.1 q-0.6 0 -0.6 -0.6z" fill="url(#fg)" stroke="#e4b440" stroke-width="0.9"/><path d="M0.7 13.1h12.9q0.4 0 0.4 -0.4v-9.4" fill="none" stroke="#cf9416" stroke-width="1.2"/><path d="M1.5 12V1.6h3.6" fill="none" stroke="#fffbe6" stroke-width="0.8"/></svg>
<div class="t r12" style="top:428.5px;line-height:16px;height:16px;left:537.0px;transform:scaleX(1.0000);transform-origin:left center;">通信处理器</div>
<svg style="left:0;top:0" width="497" height="76" viewBox="0 0 497 76"><path d="M10.1 62.9v6.6M23.7 62.9v6.6M10.1 66.3h4.2M19.5 66.3h4.2" stroke="#7c7c7c" stroke-width="1.7" fill="none"/><path d="M16.3 63.3q-3.6 2.9 0 5.8M17.6 63.3q3.6 2.9 0 5.8" stroke="#7c7c7c" stroke-width="1.6" fill="none"/><circle cx="20.5" cy="59.6" r="2.6" fill="#fbfbfb"/><path d="M22.3 60.4L24.7 61.3" stroke="#8e8e8e" stroke-width="1.3"/><path d="M21.3 61.4L22.2 63.8" stroke="#8e8e8e" stroke-width="1.3"/><path d="M19.7 61.4L18.8 63.8" stroke="#8e8e8e" stroke-width="1.3"/><path d="M18.7 60.4L16.3 61.3" stroke="#8e8e8e" stroke-width="1.3"/><path d="M18.7 58.8L16.3 57.9" stroke="#8e8e8e" stroke-width="1.3"/><path d="M19.7 57.8L18.8 55.4" stroke="#8e8e8e" stroke-width="1.3"/><path d="M21.3 57.8L22.2 55.4" stroke="#8e8e8e" stroke-width="1.3"/><path d="M22.3 58.8L24.7 57.9" stroke="#8e8e8e" stroke-width="1.3"/><path d="M33.2 62.9v6.6M46.8 62.9v6.6M33.2 66.3h4.2M42.6 66.3h4.2" stroke="#7c7c7c" stroke-width="1.7" fill="none"/><path d="M39.4 63.3q-3.6 2.9 0 5.8M40.7 63.3q3.6 2.9 0 5.8" stroke="#7c7c7c" stroke-width="1.6" fill="none"/><path d="M40.3 57.2L47.6 63.4M47.6 57.2L40.3 63.4" stroke="#111" stroke-width="1.5"/><path d="M55.6 59.8h10M55.6 62.4h10" stroke="#b4b4b4" stroke-width="1.3"/><path d="M57.6 65.8h8.5" stroke="#7a7a7a" stroke-width="1.6"/><path d="M56.1 68.7h7" stroke="#b0b0b0" stroke-width="1.3"/><circle cx="66.9" cy="59.4" r="2.6" fill="#fbfbfb"/><path d="M68.7 60.2L71.1 61.1" stroke="#8e8e8e" stroke-width="1.3"/><path d="M67.7 61.2L68.6 63.6" stroke="#8e8e8e" stroke-width="1.3"/><path d="M66.1 61.2L65.2 63.6" stroke="#8e8e8e" stroke-width="1.3"/><path d="M65.1 60.2L62.7 61.1" stroke="#8e8e8e" stroke-width="1.3"/><path d="M65.1 58.6L62.7 57.7" stroke="#8e8e8e" stroke-width="1.3"/><path d="M66.1 57.6L65.2 55.2" stroke="#8e8e8e" stroke-width="1.3"/><path d="M67.7 57.6L68.6 55.2" stroke="#8e8e8e" stroke-width="1.3"/><path d="M68.7 58.6L71.1 57.7" stroke="#8e8e8e" stroke-width="1.3"/><path d="M78.8 59.8h10M78.8 62.4h10" stroke="#b4b4b4" stroke-width="1.3"/><path d="M80.8 65.8h8.5" stroke="#7a7a7a" stroke-width="1.6"/><path d="M79.3 68.7h7" stroke="#b0b0b0" stroke-width="1.3"/><circle cx="90.1" cy="59.4" r="2.6" fill="#fbfbfb"/><path d="M91.9 60.2L94.3 61.1" stroke="#8e8e8e" stroke-width="1.3"/><path d="M90.9 61.2L91.8 63.6" stroke="#8e8e8e" stroke-width="1.3"/><path d="M89.3 61.2L88.4 63.6" stroke="#8e8e8e" stroke-width="1.3"/><path d="M88.3 60.2L85.9 61.1" stroke="#8e8e8e" stroke-width="1.3"/><path d="M88.3 58.6L85.9 57.7" stroke="#8e8e8e" stroke-width="1.3"/><path d="M89.3 57.6L88.4 55.2" stroke="#8e8e8e" stroke-width="1.3"/><path d="M90.9 57.6L91.8 55.2" stroke="#8e8e8e" stroke-width="1.3"/><path d="M91.9 58.6L94.3 57.7" stroke="#8e8e8e" stroke-width="1.3"/><path d="M81 68.7h7" stroke="#7a7a7a" stroke-width="1.8"/><path d="M99.5 51V74" stroke="#b2b2b2" stroke-width="1" stroke-dasharray="1 1" shape-rendering="crispEdges"/><defs><linearGradient id="cg" x1="0" x2="1"><stop offset="0" stop-color="#8a8a8a"/><stop offset="0.5" stop-color="#b8b8b8"/><stop offset="1" stop-color="#808080"/></linearGradient></defs><path d="M105.8 57v7.2q0 1.9 3.9 1.9q3.9 0 3.9 -1.9v-7.2z" fill="url(#cg)"/><ellipse cx="109.7" cy="57" rx="3.9" ry="1.8" fill="#c4c4c4" stroke="#9a9a9a" stroke-width="0.5"/><path d="M116 65.6h3q2.2 0 2.2 2.1q0 2 -2.4 2h-1" stroke="#666" stroke-width="1.5" fill="none"/><path d="M114.2 65.6l3 -2.3v4.6z" fill="#666"/><path d="M126.5 51V74" stroke="#b2b2b2" stroke-width="1" stroke-dasharray="1 1" shape-rendering="crispEdges"/><path d="M133.8 57.1h5.6l1 1.4h8.9v1.9h-15.5z" fill="#555"/><path d="M133.8 61.6h5.6l1 1.4h8.9v1.9h-15.5z" fill="#555"/><path d="M133.8 66.2h5.6l1 1.4h8.9v1.9h-15.5z" fill="#555"/><defs><linearGradient id="bg7" x1="0" y1="0" x2="0" y2="1"><stop offset="0" stop-color="#3d5af0"/><stop offset="1" stop-color="#1c2fc4"/></linearGradient></defs><rect x="156.8" y="55.2" width="14.8" height="14.8" rx="1.5" fill="url(#bg7)"/><rect x="158.2" y="61" width="12" height="6.4" fill="#fff"/><path d="M158.7 64.6h11.6" stroke="#000" stroke-width="1.3"/><path d="M158.7 63v3.2" stroke="#000" stroke-width="1"/><path d="M159 57.3h3.4l-1.7 2z" fill="#fff"/><rect x="179.6" y="57.1" width="15.2" height="11.6" fill="url(#bg7)"/><path d="M180 62.9h14.8" stroke="#e8ecff" stroke-width="1"/><path d="M180.6 59l2.3 1.6l-2.3 1.6zM180.6 64.2l2.3 1.6l-2.3 1.6z" fill="#fff"/><rect x="200.8" y="52.6" width="19.7" height="20.7" rx="2.3" fill="#f3f6fd" stroke="#5b86e2" stroke-width="1.1"/><path d="M210.9 56.7c3.6 0 6.3 2 6.3 4.7c0 2.7 -2.7 4.7 -6.3 4.7c-0.8 0 -1.5 -0.1 -2.2 -0.3l-3 3.4l0.7 -4.4c-1.2 -0.9 -1.9 -2 -1.9 -3.4c0 -2.7 2.8 -4.7 6.4 -4.7z" fill="#fff" stroke="#4a68e4" stroke-width="1.2"/><circle cx="208.1" cy="62.2" r="0.95" fill="#000"/><circle cx="210.8" cy="62.2" r="0.95" fill="#000"/><circle cx="213.5" cy="62.2" r="0.95" fill="#000"/><path d="M228.8 58.8l3 -3.1h7.4v6.2h-7.4z" fill="#5c2a9c"/><path d="M225.0 58.699999999999996h4.5" stroke="#5c2a9c" stroke-width="1.2"/><rect x="232.8" y="57.4" width="4.4" height="0.9" fill="#9a7ccc"/><rect x="232.8" y="59.4" width="4.4" height="0.9" fill="#9a7ccc"/><path d="M228.8 66.5l3 -3.1h7.4v6.2h-7.4z" fill="#5c2a9c"/><path d="M225.0 66.4h4.5" stroke="#5c2a9c" stroke-width="1.2"/><rect x="232.8" y="65.1" width="4.4" height="0.9" fill="#9a7ccc"/><rect x="232.8" y="67.1" width="4.4" height="0.9" fill="#9a7ccc"/><path d="M246.70000000000002 58.4h2.4v3h2.3l-3.5 3.2l-3.5 -3.2h2.3z" fill="#000"/><rect x="244.4" y="66.0" width="7" height="1.7" fill="#000"/><path d="M262.2 60.2q0 -4.4 5.3 -4.4q5.3 0 5.3 3.4q0 3 -3.6 3.4l-2.2 2.2l-0.4 -2.2q-4.4 -0.2 -4.4 -2.4z" fill="#f4f4f4" stroke="#8c8c8c" stroke-width="0.9"/><circle cx="265.2" cy="59.2" r="0.9" fill="#111"/><circle cx="267.7" cy="59.2" r="0.9" fill="#111"/><circle cx="270.2" cy="59.2" r="0.9" fill="#111"/><path d="M262.3 66.3l3 -3h8.6v6.2h-8.6z" fill="#3a3a3a"/><path d="M258.6 66.3h4.4" stroke="#3a3a3a" stroke-width="1.2"/><path d="M266 62.8l3.3 2.6l3.6 -2.6z" fill="#f4f4f4"/><path d="M279.90000000000003 58.4h2.4v3h2.3l-3.5 3.2l-3.5 -3.2h2.3z" fill="#000"/><rect x="277.6" y="66.0" width="7" height="1.7" fill="#000"/><path d="M292.6 55.6v6.6M306.2 55.6v6.6M292.6 59.0h4.2M302.0 59.0h4.2" stroke="#1d4fd8" stroke-width="1.7" fill="none"/><path d="M298.8 56.0q-3.6 2.9 0 5.8M300.1 56.0q3.6 2.9 0 5.8" stroke="#1d4fd8" stroke-width="1.6" fill="none"/><path d="M295.8 66.5l3 -3.1h7.800000000000001v6.2h-7.800000000000001z" fill="#5c2a9c"/><path d="M292.0 66.4h4.5" stroke="#5c2a9c" stroke-width="1.2"/><rect x="299.8" y="65.1" width="4.800000000000001" height="0.9" fill="#9a7ccc"/><rect x="299.8" y="67.1" width="4.800000000000001" height="0.9" fill="#9a7ccc"/><path d="M313.5 58.4h2.4v3h2.3l-3.5 3.2l-3.5 -3.2h2.3z" fill="#000"/><rect x="311.2" y="66.0" width="7" height="1.7" fill="#000"/><rect x="327" y="55.8" width="13.6" height="13.8" fill="#fff" stroke="#8aa4ea" stroke-width="1.2"/><path d="M330.5 61h8.6M328.8 65.8h10.3" stroke="#1a2468" stroke-width="1.3"/><circle cx="329.6" cy="61" r="1" fill="#1a2468"/><circle cx="351.4" cy="58.4" r="1.7" fill="#dfe8ff" stroke="#3b62e0" stroke-width="1.1"/><circle cx="351.4" cy="63" r="1.7" fill="#dfe8ff" stroke="#3b62e0" stroke-width="1.1"/><circle cx="351.4" cy="67.6" r="1.7" fill="#dfe8ff" stroke="#3b62e0" stroke-width="1.1"/><path d="M359.8 55.2l1.7 3.5l3.8 0.5l-2.8 2.7l0.7 3.8l-3.4 -1.8l-3.4 1.8l0.7 -3.8l-2.8 -2.7l3.8 -0.5z" fill="#f8d230" stroke="#c89a10" stroke-width="0.7"/><path d="M361.6 65.6v1.6q0 1 -1 1h-3" stroke="#1a2a78" stroke-width="1.3" fill="none"/><path d="M355 68.2l2.8 -2v4z" fill="#1a2a78"/><path d="M370.5 51V74" stroke="#b2b2b2" stroke-width="1" stroke-dasharray="1 1" shape-rendering="crispEdges"/><path d="M381.3 68.6q-5.2 -3.4 -1.4 -8.8" stroke="#3c3c3c" stroke-width="1.9" fill="none"/><path d="M378.2 60.4l5.2 -4.6l0.6 6.2z" fill="#3c3c3c"/><circle cx="389.2" cy="59.6" r="3.7" fill="#b4b4b4" stroke="#8a8a8a" stroke-width="0.6"/><path d="M387.3 57.7l3.8 3.8M391.09999999999997 57.7l-3.8 3.8" stroke="#fff" stroke-width="1.4"/><path d="M405 56.4q-5.8 3.6 -1.6 8.6" stroke="#3c3c3c" stroke-width="1.9" fill="none"/><path d="M401.4 65.6l6.4 3.6l-0.6 -6.4z" fill="#3c3c3c"/><circle cx="412" cy="66" r="3.7" fill="#b4b4b4" stroke="#8a8a8a" stroke-width="0.6"/><path d="M410.1 64.1l3.8 3.8M413.9 64.1l-3.8 3.8" stroke="#fff" stroke-width="1.4"/><rect x="429" y="55.6" width="8.6" height="11.4" fill="#9c9c9c"/><path d="M431.8 55.6v11.4M429 59.4h8.6" stroke="#c8c8c8" stroke-width="0.7"/><rect x="430.4" y="61.4" width="6.2" height="4.4" fill="#e8e8e8"/><text x="430.7" y="65.3" font-family="Liberation Sans,sans-serif" font-size="4.4" font-weight="bold" fill="#333">DI</text><path d="M428.2 69.4q-5.4 -3 -2 -8.2" stroke="#3c3c3c" stroke-width="1.9" fill="none"/><path d="M424 61.8l5 -4.2l0.8 6z" fill="#3c3c3c"/><path d="M444.8 54.8v6.8l4.4 -3.4z" fill="#000"/><rect x="467" y="55.8" width="13.4" height="12.4" fill="#fdfdff" stroke="#8492e2" stroke-width="1"/><rect x="467" y="55.8" width="13.4" height="2.8" fill="#a4b0f6"/><path d="M467.4 62.4h12.6" stroke="#b8c0ea" stroke-width="1"/><circle cx="478.8" cy="61.7" r="2" fill="#e8b87a" stroke="#6a4a2a" stroke-width="0.4"/><path d="M475.4 69.8q0 -5.4 3.4 -5.4q3.4 0 3.4 5.4z" fill="#1c6cc0"/><path d="M477 60.7q1.8 -2.2 3.8 0z" fill="#222"/></svg>
<svg style="left:500px;top:48px" width="244" height="30" viewBox="500 48 244 30"><rect x="630.3" y="56.599999999999994" width="2.6" height="2.4" fill="#18226e"/><path d="M629.4 60.3h4.4v6.9h-4.4z" fill="#18226e"/><rect x="636.1" y="56.599999999999994" width="2.6" height="2.4" fill="#18226e"/><path d="M635.2 60.3h4.4v6.9h-4.4z" fill="#18226e"/><rect x="632.6999999999999" y="62.6" width="2.8" height="1.6" fill="#18226e"/><path d="M641.8 56.3v8" stroke="#18226e" stroke-width="1.9"/><path d="M639.0 63.2h5.6l-2.8 4z" fill="#18226e"/><rect x="653.1" y="56.599999999999994" width="2.6" height="2.4" fill="#18226e"/><path d="M652.2 60.3h4.4v6.9h-4.4z" fill="#18226e"/><rect x="658.9000000000001" y="56.599999999999994" width="2.6" height="2.4" fill="#18226e"/><path d="M658.0000000000001 60.3h4.4v6.9h-4.4z" fill="#18226e"/><rect x="655.5" y="62.6" width="2.8" height="1.6" fill="#18226e"/><path d="M664.6 59.4v7.8" stroke="#18226e" stroke-width="1.9"/><path d="M661.8000000000001 60.3h5.6l-2.8 -4z" fill="#18226e"/><path d="M673.5 51V74" stroke="#b2b2b2" stroke-width="1" stroke-dasharray="1 1" shape-rendering="crispEdges"/><path d="M680.4 55h7l2.4 2.4v9.4h-9.4z" fill="#f6f6f6" stroke="#b0b0b0" stroke-width="0.8"/><path d="M682 59.4l1.5 3.6l1.5 -3.6" stroke="#6a6a6a" stroke-width="0.9" fill="none"/><path d="M685.5 61.4h3.4" stroke="#9a9a9a" stroke-width="0.9"/><path d="M692.8 63.8a3.1 3.1 0 1 1 -1.7 -2.8" stroke="#555" stroke-width="1.5" fill="none"/><path d="M690 59.4l3.4 1.2l-2.4 2.4z" fill="#555"/><path d="M703 57.4h4M712 57.4h3.6M703 60.8h4" stroke="#1a30d0" stroke-width="1.5"/><rect x="706.6" y="55" width="6" height="7.4" rx="1" fill="#1a30d0"/><path d="M708.1 56.8l1.5 3.4l1.5 -3.4" stroke="#fff" stroke-width="0.9" fill="none"/><path d="M717 64.6a3.6 3.6 0 1 1 -2 -3.2" stroke="#1a30d0" stroke-width="1.9" fill="none"/><path d="M713.6 59.6l4.2 1.4l-3 3z" fill="#1a30d0"/></svg>
<div class="a red" style="left:498.0px;top:168.0px;width:78.0px;height:24.3px;"></div>
<div class="a red" style="left:547.6px;top:315.5px;width:74.4px;height:38.5px;"></div>
</body>
</html>
